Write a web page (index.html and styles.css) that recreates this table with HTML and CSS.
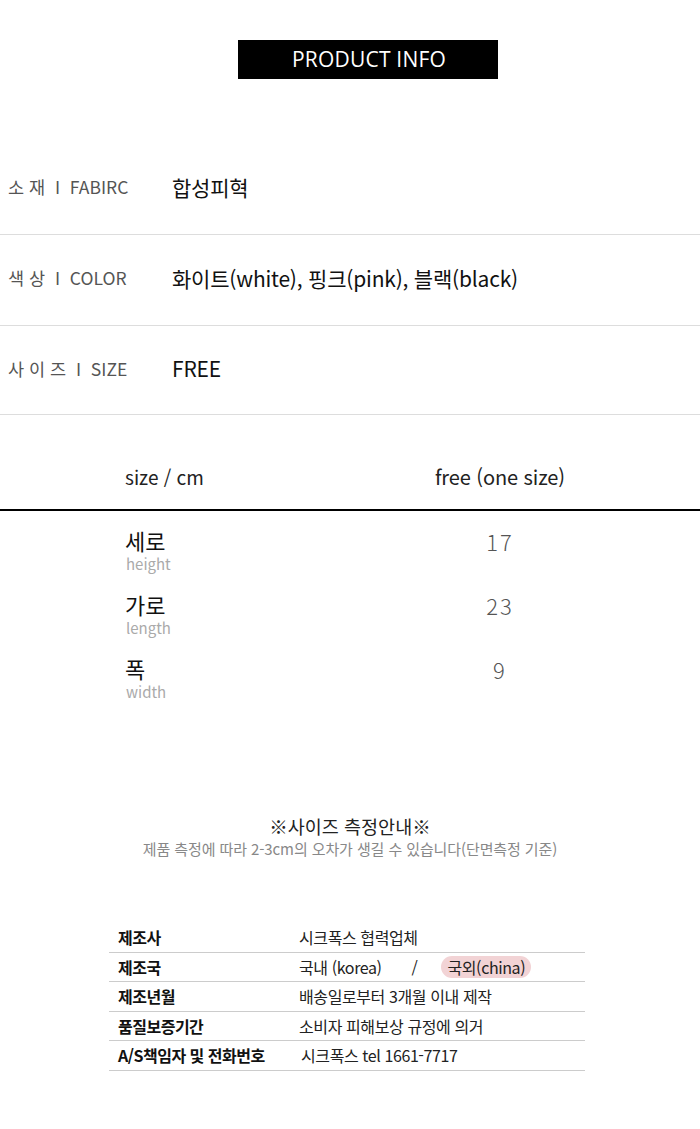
FILE: index.html
```html
<!DOCTYPE html>
<html lang="ko">
<head>
<meta charset="utf-8">
<link rel="stylesheet" href="styles.css">
</head>
<body>
<div class="page">
  <div class="title-wrap"><div class="title">PRODUCT INFO</div></div>

  <div class="info">
    <div class="info-row"><div class="label">소 재 &nbsp;I&nbsp; FABIRC</div><div class="value">합성피혁</div></div>
    <div class="info-row"><div class="label">색 상 &nbsp;I&nbsp; COLOR</div><div class="value">화이트(white), 핑크(pink), 블랙(black)</div></div>
    <div class="info-row"><div class="label">사 이 즈 &nbsp;I&nbsp; SIZE</div><div class="value">FREE</div></div>
  </div>

  <div class="size">
    <div class="size-head"><div class="sh-l">size / cm</div><div class="sh-r">free (one size)</div></div>
    <div class="size-row"><div class="sr-l"><div class="ko">세로</div><div class="en">height</div></div><div class="sr-v">17</div></div>
    <div class="size-row"><div class="sr-l"><div class="ko">가로</div><div class="en">length</div></div><div class="sr-v">23</div></div>
    <div class="size-row"><div class="sr-l"><div class="ko">폭</div><div class="en">width</div></div><div class="sr-v">9</div></div>
  </div>

  <div class="notice">
    <div class="n-title">※사이즈 측정안내※</div>
    <div class="n-sub">제품 측정에 따라 2-3cm의 오차가 생길 수 있습니다(단면측정 기준)</div>
  </div>

  <div class="maker">
    <div class="m-row"><div class="m-l">제조사</div><div class="m-v">시크폭스 협력업체</div></div>
    <div class="m-row"><div class="m-l">제조국</div><div class="m-v"><span>국내 (korea)</span><span class="slash">/</span><span class="pill">국외(china)</span></div></div>
    <div class="m-row"><div class="m-l">제조년월</div><div class="m-v">배송일로부터 3개월 이내 제작</div></div>
    <div class="m-row"><div class="m-l">품질보증기간</div><div class="m-v">소비자 피해보상 규정에 의거</div></div>
    <div class="m-row"><div class="m-l">A/S책임자 및 전화번호</div><div class="m-v m-v2">시크폭스 tel 1661-7717</div></div>
  </div>
</div>
</body>
</html>
```

FILE: styles.css
```css
* { box-sizing: border-box; }
html, body { margin: 0; padding: 0; background: #fff; }
body {
  font-family: "Noto Sans CJK KR", "Noto Sans", sans-serif;
  color: #111;
}
.page { width: 700px; height: 1129px; overflow: hidden; }

.title-wrap { padding: 40px 0 0 238px; }
.title {
  width: 260px; height: 39px; background: #000; color: #fff;
  font-family: "Open Sans", "Noto Sans", sans-serif;
  font-size: 21px; line-height: 39px; text-align: center; letter-spacing: 0.2px;
  padding-left: 2px;
}

.info { margin-top: 65px; }
.info-row {
  display: flex; align-items: center; height: 91px; padding-bottom: 5px;
  border-bottom: 1px solid #ddd;
}
.info-row:last-child { height: 89px; padding-bottom: 4px; }
.label {
  width: 172px; padding-left: 8px;
  font-size: 17.5px; color: #555;
}
.value { font-size: 21px; color: #111; letter-spacing: -0.2px; }

.size { margin-top: 43px; }
.size-head {
  display: flex; align-items: flex-start; height: 53px; padding-top: 5px;
  border-bottom: 2px solid #000;
}
.sh-l { width: 300px; padding-left: 125px; font-size: 19px; line-height: 28px; color: #222; }
.sh-r { width: 400px; text-align: center; font-size: 20px; line-height: 28px; color: #222; letter-spacing: -0.1px; }

.size-row { display: flex; height: 64px; }
.size-head + .size-row { margin-top: 16px; }
.sr-l { width: 300px; padding-left: 125px; }
.ko { font-size: 22px; line-height: 26px; color: #111; }
.en { font-size: 15px; line-height: 18px; color: #aaa; padding-left: 1px; margin-top: 2px; }
.sr-v { width: 400px; text-align: center; font-size: 22px; line-height: 28px; color: #555; letter-spacing: 2px; font-weight: 300; }

.notice { margin-top: 95px; text-align: center; }
.n-title { font-size: 18.5px; color: #222; line-height: 24px; }
.n-sub { font-size: 15px; color: #888; line-height: 21px; letter-spacing: -0.1px; }

.maker { margin: 64px 0 0 109px; width: 476px; }
.m-row {
  display: flex; align-items: center; height: 29.5px;
  border-bottom: 1px solid #ccc;
}
.m-l { width: 190px; padding-left: 9px; font-size: 16px; font-weight: bold; color: #111; letter-spacing: -0.5px; }
.m-v { font-size: 16px; color: #222; letter-spacing: -0.4px; display: flex; align-items: center; }
.m-v2 { padding-left: 2px; }
.slash { margin-left: 30px; margin-right: 24px; }
.pill { background: #f2d3d5; border-radius: 12px; padding: 0 6px; line-height: 22px; }
```
